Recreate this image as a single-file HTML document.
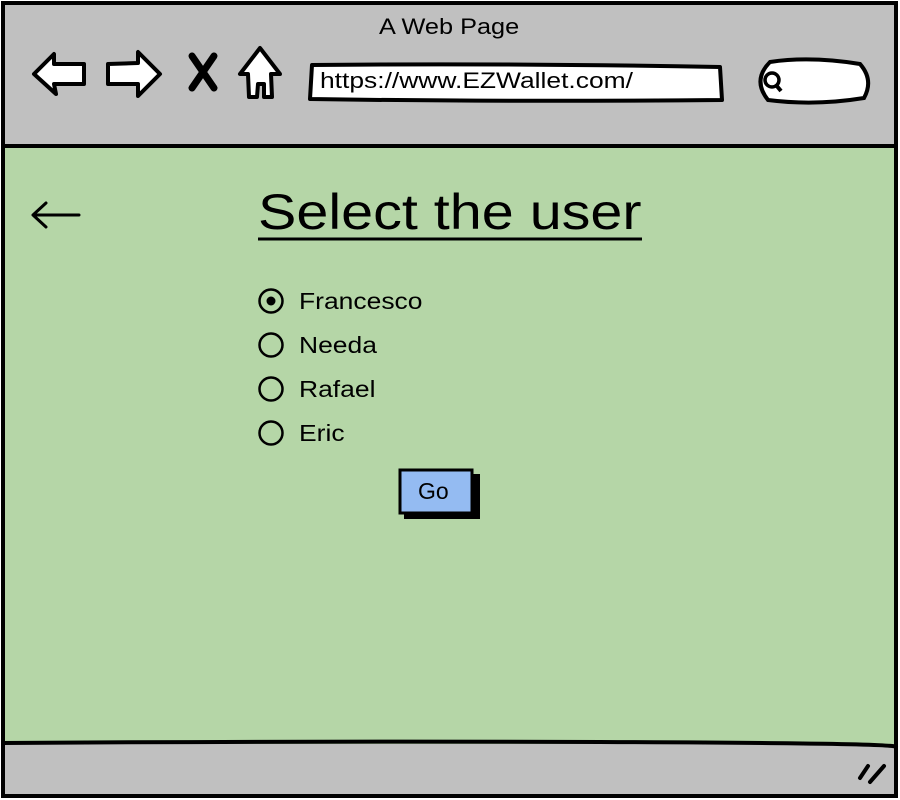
<!DOCTYPE html>
<html><head><style>
body{margin:0;width:900px;height:800px;overflow:hidden;background:#fff;font-family:"Liberation Sans",sans-serif}
.t{position:absolute;white-space:nowrap;color:#000;transform-origin:0 0}
</style></head><body>
<svg width="900" height="800" style="position:absolute;left:0;top:0">
<rect x="3" y="3" width="893" height="793" fill="#c0c0c0" stroke="#000" stroke-width="4"/>
<rect x="5" y="146" width="889" height="598" fill="#b5d6a7"/>
<path d="M3 146 L896 146" stroke="#000" stroke-width="4"/>
<path d="M3 743 Q300 741 600 742 T896 747" stroke="#000" stroke-width="4" fill="none"/>
<path d="M34 74 L54 54 L54 64 L84 64 L84 84 L54 84 L56 94 Z" fill="#fff" stroke="#000" stroke-width="4" stroke-linejoin="round"/>
<path d="M160 74 L138 52 L138 63 L108 64 L108 84 L138 84 L138 96 Z" fill="#fff" stroke="#000" stroke-width="4" stroke-linejoin="round"/>
<path d="M192 56 L214 88 M214 56 L192 88" stroke="#000" stroke-width="7" stroke-linecap="round"/>
<path d="M260 48 L240 74 L248 74 L249 97 L257 97 L258 84 L264 84 L264 97 L272 97 L271 74 L280 74 Z" fill="#fff" stroke="#000" stroke-width="4" stroke-linejoin="round"/>
<path d="M312 65 Q500 63 720 67 L722 100 Q500 102 310 99 Z" fill="#fff" stroke="#000" stroke-width="4" stroke-linejoin="round"/>
<path d="M770 62 Q810 56 860 64 Q874 80 864 98 Q815 106 768 100 Q752 80 770 62 Z" fill="#fff" stroke="#000" stroke-width="4"/>
<circle cx="772" cy="80" r="7" fill="none" stroke="#000" stroke-width="3.5"/>
<path d="M776 85 L781 91" stroke="#000" stroke-width="4"/>
<path d="M33 215 L79 215 M33 215 L46 203 M33 215 L46 227" stroke="#000" stroke-width="3" fill="none" stroke-linecap="round"/>
<path d="M258 239 L642 239" stroke="#000" stroke-width="3"/>
<g fill="none" stroke="#000" stroke-width="2.5">
<circle cx="271" cy="301" r="11.5"/><circle cx="271" cy="345" r="11.5"/><circle cx="271" cy="389" r="11.5"/><circle cx="271" cy="433" r="11.5"/>
</g>
<circle cx="271" cy="301" r="4.5" fill="#000"/>
<rect x="404" y="474" width="76" height="45" fill="#000"/>
<rect x="400" y="470" width="72" height="43" fill="#94bbf2" stroke="#000" stroke-width="3"/>
<path d="M860 778 L868 766 M870 782 L884 766" stroke="#000" stroke-width="4" stroke-linecap="round"/>
</svg>
<div class="t" style="left:379px;top:14px;font-size:22px;transform:scaleX(1.15)">A Web Page</div>
<div class="t" style="left:320px;top:68px;font-size:22px;transform:scaleX(1.2)">https://www.EZWallet.com/</div>
<div class="t" style="left:258px;top:183px;font-size:50px;transform:scaleX(1.15)">Select the user</div>
<div class="t" style="left:299px;top:288px;font-size:23px;transform:scaleX(1.15)">Francesco</div>
<div class="t" style="left:299px;top:332px;font-size:23px;transform:scaleX(1.15)">Needa</div>
<div class="t" style="left:299px;top:376px;font-size:23px;transform:scaleX(1.15)">Rafael</div>
<div class="t" style="left:299px;top:420px;font-size:23px;transform:scaleX(1.15)">Eric</div>
<div class="t" style="left:418px;top:478px;font-size:23px">Go</div>
</body></html>
